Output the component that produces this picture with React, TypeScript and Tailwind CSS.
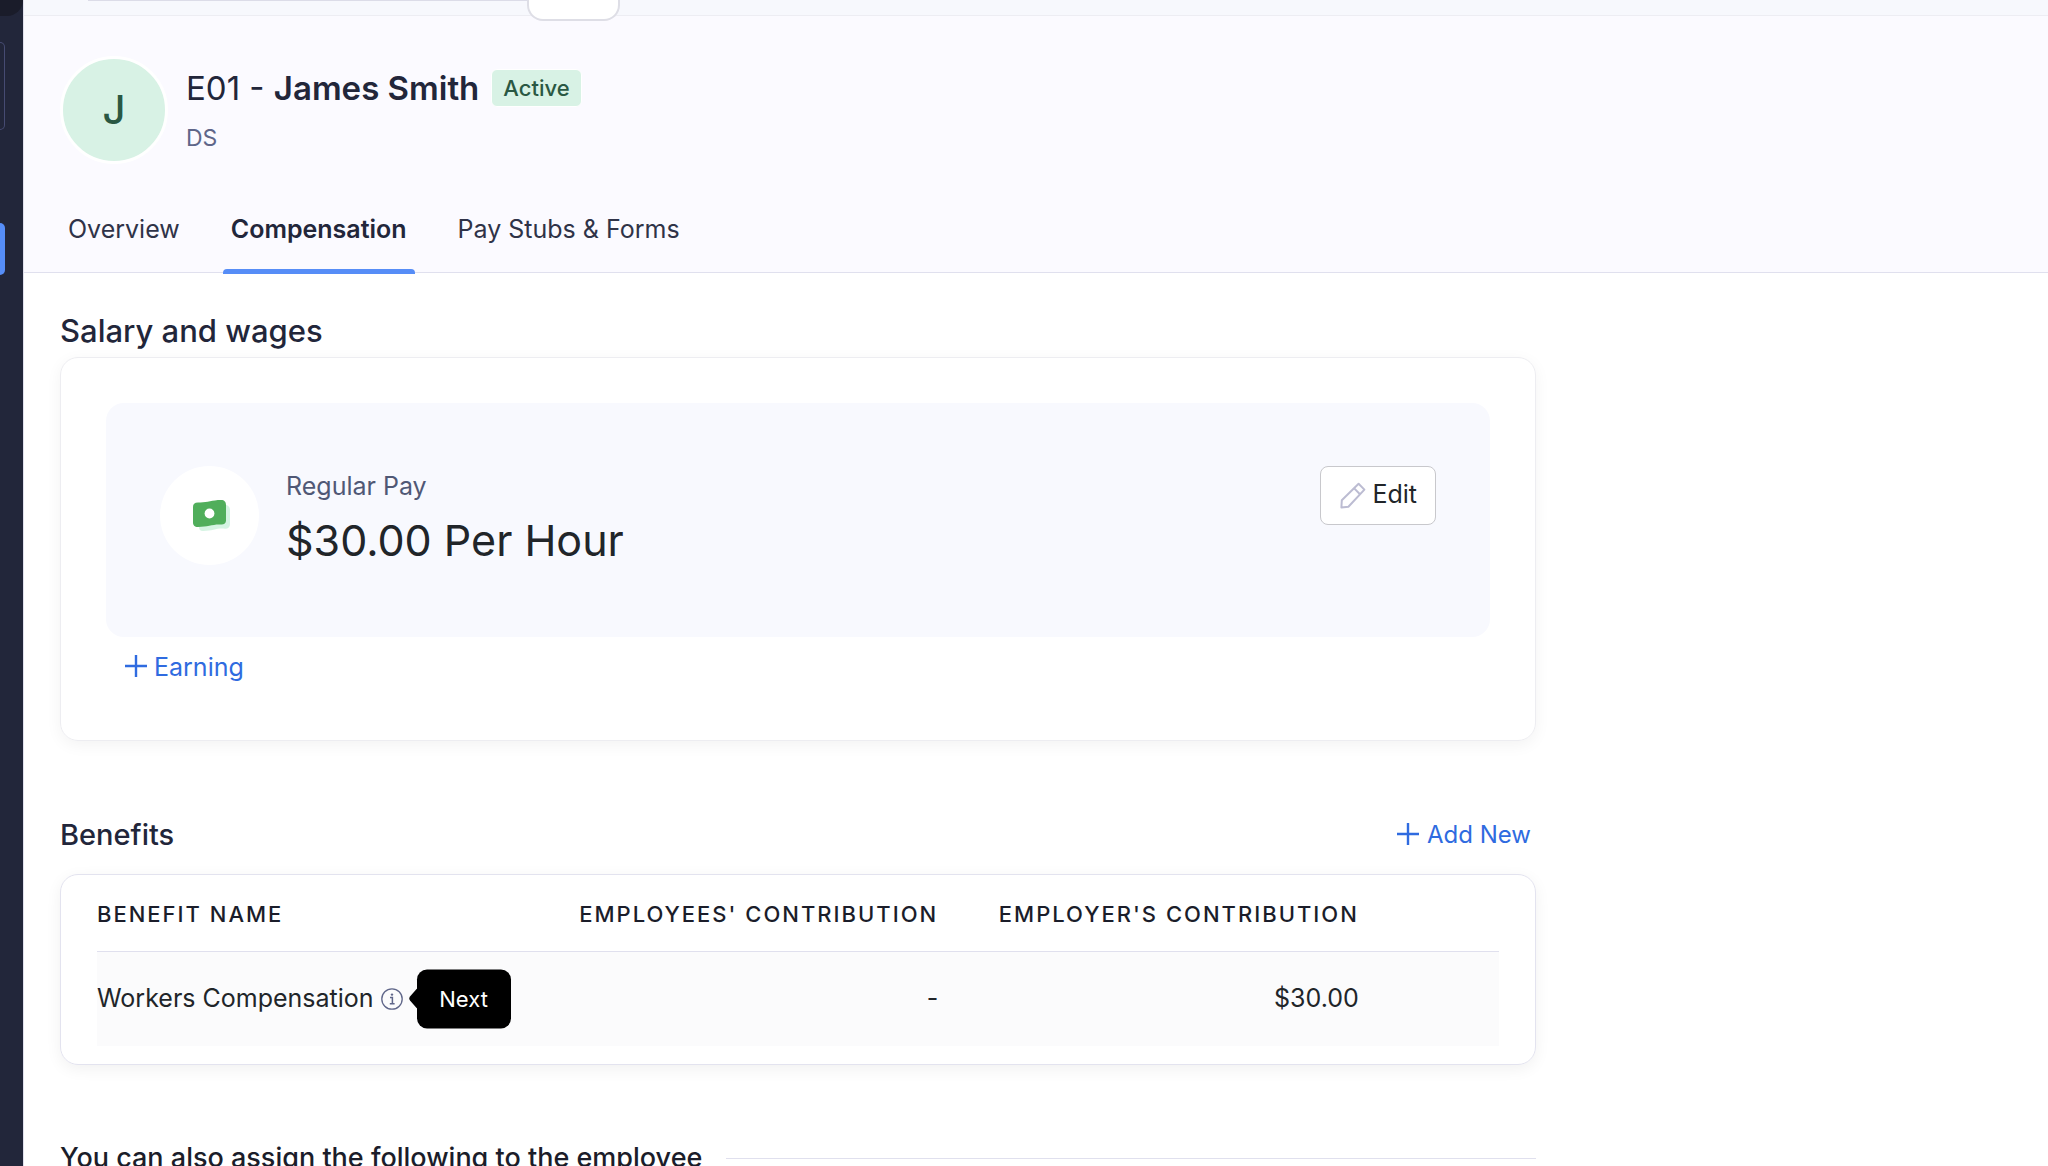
import React from 'react';

interface Benefit {
  name: string;
  hint: string;
  employee: string;
  employer: string;
}

const tabs = ['Overview', 'Compensation', 'Pay Stubs & Forms'];

const benefits: Benefit[] = [
  { name: 'Workers Compensation', hint: 'Next', employee: '-', employer: '$30.00' },
];

const PlusIcon: React.FC = () => (
  <svg className="size-6" viewBox="0 0 24 24" fill="none" stroke="currentColor" strokeWidth="2.4" aria-hidden="true">
    <path d="M12 0v22M1 11h22" />
  </svg>
);

const PencilIcon: React.FC = () => (
  <svg className="size-7 text-[#bcbcd2]" viewBox="0 0 28 28" fill="none" stroke="currentColor" strokeWidth="2" strokeLinejoin="round" aria-hidden="true">
    <path d="M2.4 26.4l.4-7.2L19.600 2.800l5.800 5.800L9.400 25.800z" />
    <path d="M15.200 7.400l5.800 5.800" />
  </svg>
);

const InfoIcon: React.FC = () => (
  <svg className="size-[22px] text-[#5f6689]" viewBox="0 0 22 22" fill="none" stroke="currentColor" aria-hidden="true">
    <circle cx="11" cy="11" r="10.2" strokeWidth="1.3" />
    <path d="M9 9.400h2.400v6.200M8.800 15.700h4.800" strokeWidth="1.5" />
    <circle cx="11" cy="6.600" r="1.2" fill="currentColor" stroke="none" />
  </svg>
);

const CashIcon: React.FC = () => (
  <svg className="h-[31px] w-[37px]" viewBox="0 0 37 31" aria-hidden="true">
    <path d="M32 5c3 0 5 2 5 5v14c0 3-2 5-5 4.800-8-1-12 2.200-22 2.200-3 0-4-1.500-4-4V12z" fill="#d5f4e3" />
    <path d="M0 7c0-3 1.500-4.600 5-4.600C14 3 18 0 28 0c3.500 0 5 2 5 5v15.500c0 3-2 4.300-5 4.100C20 24 15 27 5 27c-3.500 0-5-2-5-4.500z" fill="#50ae5b" />
    <circle cx="16.500" cy="13.500" r="4.900" fill="#fff" />
  </svg>
);

const Sidebar: React.FC = () => (
  <aside className="w-6 shrink-0 border-r border-[#e0e0ec] bg-[#22263a]">
    <div className="h-4 rounded-br-2xl bg-[#1a1c2a]" />
    <div className="mt-[26px] mr-[18px] h-[88px] rounded-r-2xl border border-l-0 border-[#464b72]" />
    <div className="mt-[93px] mr-[18px] h-[52px] rounded-r-lg bg-[#568df7]" />
  </aside>
);

const TopBar: React.FC = () => (
  <div className="flex h-4 items-start border-b border-[#ededf3] bg-[#f7f8fd] pl-16">
    <div className="h-px w-[439px] bg-[#dcdce8]" />
    <div className="z-10 h-[21px] w-[93px] shrink-0 rounded-b-2xl border-2 border-t-0 border-[#dedee6] bg-white" />
  </div>
);

const Header: React.FC = () => (
  <header className="border-b border-[#e0e0ee] bg-[#fbfaff] px-9 pt-10">
    <div className="flex gap-[18px]">
      <div className="flex size-[108px] items-center justify-center rounded-full border-[3px] border-white bg-[#d8f2e5] text-[40px] font-medium text-[#2a5843]">
        J
      </div>
      <div className="pt-2">
        <div className="flex items-center gap-3">
          <h1 className="text-[33px] leading-12">
            E01 - <span className="font-semibold">James Smith</span>
          </h1>
          <span className="rounded-md border border-white bg-[#d8f2e5] px-[11px] text-[22px] leading-9 font-medium text-[#2a5843]">
            Active
          </span>
        </div>
        <p className="mt-[2px] text-[23px] leading-12 text-[#5f6689]">DS</p>
      </div>
    </div>
    <nav className="mt-[33px] flex gap-[35px] text-[25px] leading-[64px]">
      {tabs.map((tab) => (
        <a
          key={tab}
          href="#"
          className={
            tab === 'Compensation'
              ? '-mb-[2px] flex h-[77px] flex-col justify-between px-2 font-semibold'
              : 'px-2 text-[#2f3348]'
          }
        >
          {tab}
          {tab === 'Compensation' && <span className="-mx-2 h-[5px] shrink-0 rounded-t bg-[#568df7]" />}
        </a>
      ))}
    </nav>
  </header>
);

const SalaryCard: React.FC = () => (
  <section>
    <h2 className="text-[31px] leading-12 font-medium">Salary and wages</h2>
    <div className="mt-[2px] rounded-[18px] border border-[#ededf1] px-[45px] pt-[45px] pb-[51px] shadow-[0_4px_16px_rgba(0,0,0,0.05)]">
      <div className="flex items-start rounded-[18px] bg-[#f8f9fe] px-[54px] py-[63px]">
        <div className="flex size-[99px] items-center justify-center rounded-full bg-white pl-[3px]">
          <CashIcon />
        </div>
        <div className="ml-[27px] flex-1">
          <p className="text-[25px] leading-10 text-[#505875]">Regular Pay</p>
          <p className="text-[43px] leading-[68px] text-[#212529]">$30.00 Per Hour</p>
        </div>
        <button className="flex h-[59px] items-center gap-[5px] rounded-lg border border-[#c8c8cc] bg-white px-[18px] pb-px text-[25px] text-[#212529]">
          <PencilIcon />
          Edit
        </button>
      </div>
      <button className="mt-2 ml-[18px] flex items-center gap-[6px] text-[25px] leading-11 text-[#2f6be0]">
        <PlusIcon />
        Earning
      </button>
    </div>
  </section>
);

const BenefitsCard: React.FC = () => (
  <section className="mt-[70px]">
    <div className="flex items-center justify-between pr-[5px]">
      <h2 className="text-[29px] leading-12 font-medium">Benefits</h2>
      <button className="flex items-center gap-[7px] text-2xl text-[#2f6be0]">
        <PlusIcon />
        Add New
      </button>
    </div>
    <div className="mt-[15px] rounded-[18px] border border-[#e3e3ef] px-9 pb-[18px] shadow-[0_4px_16px_rgba(0,0,0,0.06)]">
      <table className="w-full table-fixed">
        <thead>
          <tr className="h-[76px] border-b border-[#e0e0ee] text-[22px] tracking-[2px] text-[#1b1d2a] uppercase">
            <th className="w-[30%] pt-1 text-left font-medium">Benefit Name</th>
            <th className="w-[30%] pt-1 text-right font-medium">Employees' Contribution</th>
            <th className="w-[30%] pt-1 text-right font-medium">Employer's Contribution</th>
            <th />
          </tr>
        </thead>
        <tbody>
          {benefits.map((benefit) => (
            <tr key={benefit.name} className="h-[95px] bg-[#fbfbfc] text-[25px] text-[#212529]">
              <td>
                <div className="flex items-center gap-[7px] whitespace-nowrap">
                  {benefit.name}
                  <button className="relative" aria-label="Benefit details">
                    <InfoIcon />
                    <span className="absolute top-1/2 left-full ml-[14px] flex h-[59px] w-[94px] -translate-y-1/2 items-center justify-center rounded-[10px] bg-black text-[22px] text-white">
                      <svg className="absolute right-full h-5 w-2" viewBox="0 0 8 20" aria-hidden="true">
                        <path d="M8 0v20L1 12q-1.500-2 0-4z" fill="#000" />
                      </svg>
                      {benefit.hint}
                    </span>
                  </button>
                </div>
              </td>
              <td className="text-right">{benefit.employee}</td>
              <td className="text-right">{benefit.employer}</td>
              <td />
            </tr>
          ))}
        </tbody>
      </table>
    </div>
  </section>
);

export default function App() {
  return (
    <div className="flex h-screen overflow-hidden bg-white font-['Inter',sans-serif] text-[#22263a]">
      <Sidebar />
      <main className="min-w-0 flex-1">
        <TopBar />
        <Header />
        <div className="max-w-[1548px] px-9 pt-[34px]">
          <SalaryCard />
          <BenefitsCard />
          <div className="mt-[67px] flex items-center gap-6">
            <h2 className="text-[27px] leading-[52px] font-medium whitespace-nowrap text-[#1b1d2a]">
              You can also assign the following to the employee
            </h2>
            <hr className="flex-1 border-[#e0e0ee]" />
          </div>
        </div>
      </main>
    </div>
  );
}
